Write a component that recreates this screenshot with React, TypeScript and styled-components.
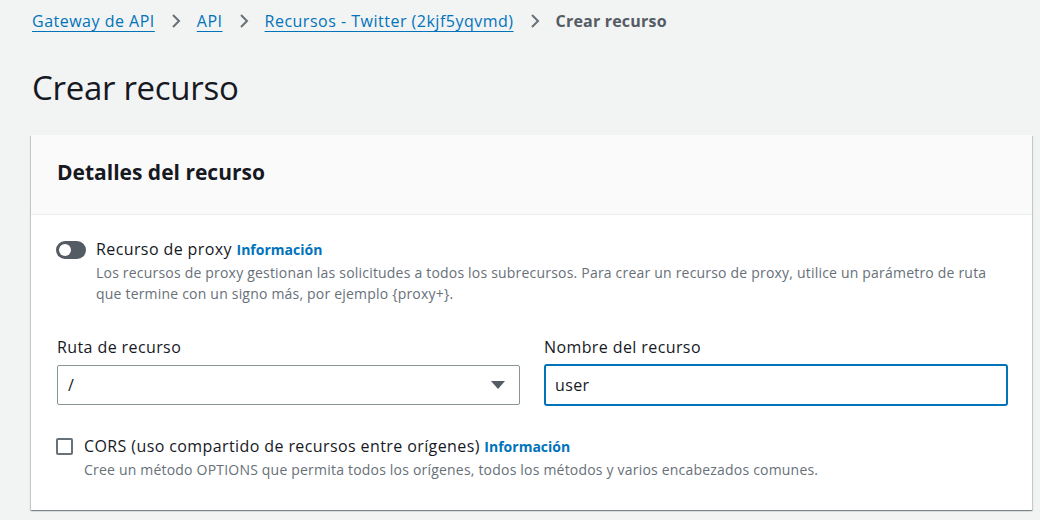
import React, { useState } from 'react';
import styled, { createGlobalStyle } from 'styled-components';

const GlobalStyle = createGlobalStyle`
  html, body {
    margin: 0;
    padding: 0;
    background: #f2f3f3;
    font-family: 'Open Sans', 'Noto Sans', sans-serif;
    color: #16191f;
  }
  * { box-sizing: border-box; }
`;

const crumbs = ['Gateway de API', 'API', 'Recursos - Twitter (2kjf5yqvmd)'];

const Chevron = () => (
  <svg width="12" height="16" viewBox="0 0 12 16">
    <path d="M3 2 L9 8 L3 14" fill="none" stroke="#687078" strokeWidth="2" />
  </svg>
);

const App = () => {
  const [name, setName] = useState('user');
  const [cors, setCors] = useState(false);

  return (
    <>
      <GlobalStyle />
      <Page>
        <Breadcrumbs>
          {crumbs.map((c) => (
            <React.Fragment key={c}>
              <CrumbLink href="#">{c}</CrumbLink>
              <Chevron />
            </React.Fragment>
          ))}
          <CrumbCurrent>Crear recurso</CrumbCurrent>
        </Breadcrumbs>
        <PageTitle>Crear recurso</PageTitle>
        <Card>
          <CardHeader>
            <CardTitle>Detalles del recurso</CardTitle>
          </CardHeader>
          <CardBody>
            <OptionRow>
              <Toggle />
              <OptionText>
                <OptionLabel>
                  Recurso de proxy <InfoLink href="#">Información</InfoLink>
                </OptionLabel>
                <OptionDesc>
                  Los recursos de proxy gestionan las solicitudes a todos los subrecursos. Para crear un
                  recurso de proxy, utilice un parámetro de ruta que termine con un signo más, por
                  ejemplo {'{proxy+}'}.
                </OptionDesc>
              </OptionText>
            </OptionRow>
            <FieldGrid>
              <Field>
                <FieldLabel>Ruta de recurso</FieldLabel>
                <SelectBox>
                  <span>/</span>
                  <svg width="14" height="10" viewBox="0 0 14 10">
                    <path d="M0 1 H14 L7 9 Z" fill="#545b64" />
                  </svg>
                </SelectBox>
              </Field>
              <Field>
                <FieldLabel>Nombre del recurso</FieldLabel>
                <TextInput value={name} onChange={(e) => setName(e.target.value)} />
              </Field>
            </FieldGrid>
            <OptionRow $checkbox>
              <Checkbox type="checkbox" checked={cors} onChange={() => setCors(!cors)} />
              <OptionText>
                <OptionLabel>
                  CORS (uso compartido de recursos entre orígenes){' '}
                  <InfoLink href="#">Información</InfoLink>
                </OptionLabel>
                <OptionDesc>
                  Cree un método OPTIONS que permita todos los orígenes, todos los métodos y varios
                  encabezados comunes.
                </OptionDesc>
              </OptionText>
            </OptionRow>
          </CardBody>
        </Card>
      </Page>
    </>
  );
};

export default App;

const Page = styled.div`
  padding: 8px 8px 0 31px;
  height: 520px;
  overflow: hidden;
`;

const Breadcrumbs = styled.nav`
  display: flex;
  align-items: center;
  gap: 15px;
  height: 26px;
  padding-left: 1px;
  font-size: 16px;
  letter-spacing: 0.5px;
`;

const CrumbLink = styled.a`
  color: #0073bb;
  text-decoration: underline;
  text-underline-offset: 4px;
  text-decoration-thickness: 1px;
`;

const CrumbCurrent = styled.span`
  color: #545b64;
  font-weight: 700;
  letter-spacing: 0.2px;
`;

const PageTitle = styled.h1`
  margin: 34px 0 0 1px;
  font-size: 33px;
  font-weight: 400;
  line-height: 40px;
  letter-spacing: -0.3px;
  color: #16191f;
`;

const Card = styled.section`
  margin-top: 27px;
  width: 1001px;
  background: #fff;
  box-shadow: 0 1px 1px 0 rgba(0, 28, 36, 0.3), 1px 1px 1px 0 rgba(0, 28, 36, 0.15),
    -1px 1px 1px 0 rgba(0, 28, 36, 0.15);
`;

const CardHeader = styled.header`
  background: #fafafa;
  border-bottom: 1px solid #eaeded;
  height: 80px;
  display: flex;
  align-items: center;
  padding: 0 26px 5px;
`;

const CardTitle = styled.h2`
  margin: 0;
  font-size: 21px;
  font-weight: 700;
`;

const CardBody = styled.div`
  padding: 22px 26px 30px 25px;
`;

const OptionRow = styled.div<{ $checkbox?: boolean }>`
  display: flex;
  align-items: flex-start;
  gap: ${(p) => (p.$checkbox ? '11px' : '10px')};
  margin-top: ${(p) => (p.$checkbox ? '28px' : '0')};
`;

const Toggle = styled.span`
  position: relative;
  flex: none;
  width: 30px;
  height: 18px;
  margin-top: 4px;
  border-radius: 9px;
  background: #545b64;
  &::after {
    content: '';
    position: absolute;
    left: 3px;
    top: 3px;
    width: 12px;
    height: 12px;
    border-radius: 50%;
    background: #fff;
  }
`;

const Checkbox = styled.input`
  appearance: none;
  flex: none;
  width: 17px;
  height: 17px;
  margin: 4px 0 0 0;
  border: 2px solid #687078;
  border-radius: 2px;
  background: #fff;
`;

const OptionText = styled.div`
  display: flex;
  flex-direction: column;
`;

const OptionLabel = styled.div`
  font-size: 16px;
  line-height: 24px;
  letter-spacing: 0.4px;
`;

const InfoLink = styled.a`
  color: #0073bb;
  font-size: 14px;
  font-weight: 700;
  text-decoration: none;
  letter-spacing: 0;
`;

const OptionDesc = styled.p`
  margin: 0;
  font-size: 14px;
  line-height: 21px;
  color: #687078;
  letter-spacing: 0.2px;
  max-width: 920px;
`;

const FieldGrid = styled.div`
  display: grid;
  grid-template-columns: 463px 464px;
  column-gap: 24px;
  margin-top: 32px;
  padding-left: 1px;
`;

const Field = styled.div`
  display: flex;
  flex-direction: column;
  gap: 7px;
`;

const FieldLabel = styled.label`
  font-size: 16px;
  line-height: 22px;
  letter-spacing: 0.4px;
`;

const SelectBox = styled.div`
  display: flex;
  align-items: center;
  justify-content: space-between;
  height: 40px;
  padding: 0 14px 0 10px;
  border: 1px solid #879596;
  border-radius: 2px;
  font-size: 16px;
`;

const TextInput = styled.input`
  height: 42px;
  margin-top: -1px;
  padding: 0 9px;
  border: 2px solid #0073bb;
  border-radius: 3px;
  font-family: inherit;
  font-size: 16px;
  letter-spacing: 0.4px;
  color: #16191f;
  outline: none;
`;
